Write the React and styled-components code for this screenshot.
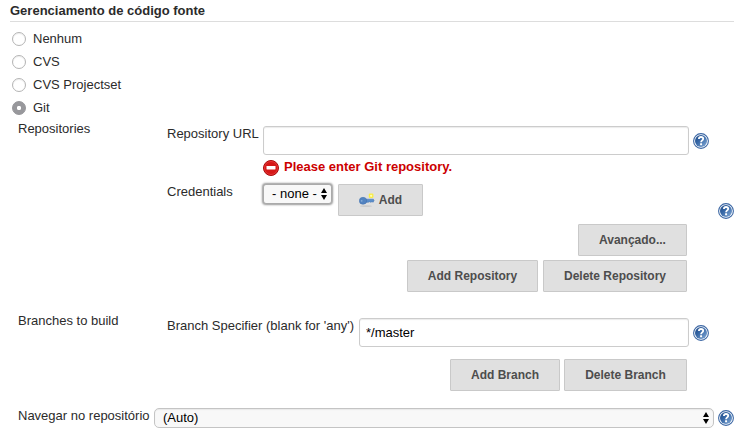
import React, { useId } from "react";
import styled, { createGlobalStyle } from "styled-components";

const GlobalStyle = createGlobalStyle`
  *, *::before, *::after { box-sizing: border-box; }
  body {
    margin: 0;
    background: #fff;
    color: #2b2b2b;
    font: 13px/16px "Liberation Sans", Arial, sans-serif;
  }
`;

const Page = styled.main`
  width: 739px;
  height: 443px;
  padding: 2px 5px 0 10px;
  overflow: hidden;
`;

const SectionTitle = styled.h2`
  margin: 0;
  height: 20px;
  padding-top: 1px;
  border-bottom: 1px solid #ddd;
  font-size: 13px;
  line-height: 16px;
`;

const RadioList = styled.div`
  padding: 5px 0 1px 2px;
`;

const RadioOption = styled.label`
  display: flex;
  align-items: center;
  gap: 7px;
  height: 23px;
`;

const Radio = styled.input`
  appearance: none;
  flex: none;
  width: 14px;
  height: 14px;
  margin: 0;
  border: 1px solid #b4b4b4;
  border-radius: 50%;
  background: #fff;
  box-shadow: inset 0 1px 1px #eee;
  &:checked {
    border-color: #949498;
    background: radial-gradient(circle, #fff 0 1.8px, #98989c 2.5px);
    box-shadow: none;
  }
`;

const FormBlock = styled.section`
  display: grid;
  grid-template-columns: 149px 1fr;
  height: ${(p) => p.$height}px;
  padding-left: 8px;
`;

const BlockLabel = styled.div`
  padding-top: 1px;
`;

const Fields = styled.div`
  display: flex;
  flex-direction: column;
  padding-top: 6px;
`;

const FieldRow = styled.div`
  display: flex;
  align-items: flex-start;
  height: ${(p) => p.$height}px;
`;

const FieldLabel = styled.label`
  flex: none;
  width: ${(p) => p.$width}px;
  white-space: nowrap;
`;

const TextInput = styled.input`
  flex: none;
  width: ${(p) => p.$width}px;
  height: 29px;
  padding: 0 6px 1px;
  border: 1px solid #ccc;
  border-radius: 3px;
  box-shadow: inset 0 1px 1px #ececec;
  font: inherit;
  color: #000;
  outline: none;
`;

const HelpButton = styled.a`
  flex: none;
  display: block;
  width: 16px;
  height: 16px;
  margin: ${(p) => p.$top || 0}px 0 0 4px;
  svg { display: block; }
`;

const ErrorMessage = styled.div`
  display: flex;
  gap: 5px;
  height: 24px;
  margin-left: 96px;
  color: #c00;
  font-weight: bold;
  svg { flex: none; }
  span { margin-top: -1px; }
`;

const SelectBox = styled.button`
  display: flex;
  flex: none;
  align-items: center;
  justify-content: space-between;
  width: ${(p) => p.$width}px;
  height: 20px;
  padding: 0 4px 0 8px;
  border: 1px solid ${(p) => (p.$focused ? "#aaa" : "#c4c4c4")};
  border-radius: ${(p) => (p.$focused ? 3 : 5)}px;
  background: #f8f8f8;
  box-shadow: ${(p) => (p.$focused ? "0 0 2px 1px #999" : "inset 0 1px 1px #e8e8e8")};
  font: 13px/16px "Liberation Sans", Arial, sans-serif;
  color: #000;
  white-space: nowrap;
  svg { flex: none; }
`;

const Button = styled.button`
  display: flex;
  flex: none;
  align-items: center;
  justify-content: center;
  gap: 4px;
  width: ${(p) => p.$width}px;
  height: 32px;
  padding: 0 0 1px;
  border: 1px solid #c9c9c9;
  border-radius: 1px;
  background: #e0e0e0;
  color: #4d4d4d;
  font: bold 12px/16px "Liberation Sans", Arial, sans-serif;
  white-space: nowrap;
`;

const ButtonRow = styled.div`
  display: flex;
  justify-content: flex-end;
  gap: ${(p) => p.$gap || 5}px;
  height: 36px;
  padding-right: 47px;
`;

const CredentialsControls = styled.div`
  display: flex;
  flex: 1;
  align-items: flex-start;
  gap: 6px;
`;

const BrowserRow = styled.div`
  display: flex;
  padding-left: 8px;
`;

function HelpIcon() {
  const id = useId();
  return (
    <svg width="16" height="16" viewBox="0 0 16 16" aria-hidden="true">
      <defs>
        <linearGradient id={id} x1="0" y1="0" x2="1" y2="1">
          <stop offset="0" stopColor="#204a87" />
          <stop offset=".4" stopColor="#3465a4" />
          <stop offset="1" stopColor="#86acd8" />
        </linearGradient>
      </defs>
      <circle cx="8" cy="8" r="7.4" fill="#fff" stroke="#3c67a4" strokeWidth="1.1" />
      <circle cx="8" cy="8" r="6" fill={`url(#${id})`} />
      <path d="M5.9 6C6 4.6 6.8 4 8 4c1.4 0 2.2.7 2.2 1.8 0 1.5-2.1 1.7-2.1 3.4" fill="none" stroke="#fff" strokeWidth="1.8" />
      <rect x="7.1" y="10.3" width="2" height="1.9" rx=".3" fill="#fff" />
    </svg>
  );
}

function Help({ top }) {
  return (
    <HelpButton $top={top} href="#" aria-label="Help">
      <HelpIcon />
    </HelpButton>
  );
}

function ErrorIcon() {
  return (
    <svg width="16" height="16" viewBox="0 0 16 16" aria-hidden="true">
      <circle cx="8" cy="8" r="7.5" fill="#d51818" stroke="#a90b0b" />
      <circle cx="8" cy="8" r="6.5" fill="none" stroke="#ed4a4a" strokeWidth=".6" />
      <rect x="3.5" y="6" width="9" height="3.5" rx=".4" fill="#fff" />
    </svg>
  );
}

function KeyIcon() {
  return (
    <svg width="16" height="16" viewBox="0 0 16 16" aria-hidden="true">
      <ellipse cx="7" cy="14.2" rx="6" ry=".9" fill="#c2c2c2" opacity=".7" />
      <path d="M7 7.2h7.3l.8 1.1-.9 1.9-1.2-.5-1.3.6-1.2-.6-1.2.6H7z" fill="#5b8ecb" stroke="#3e6eae" strokeWidth=".5" />
      <ellipse cx="4" cy="8.8" rx="3.7" ry="3.5" fill="#5383c0" stroke="#3e6eae" strokeWidth=".5" />
      <circle cx="2.7" cy="8.8" r=".9" fill="#86acd8" />
      <rect x="9.8" y="1.5" width="4.6" height="4.6" rx="1" fill="#f8ed48" />
      <circle cx="12.1" cy="3.8" r="1.1" fill="#fffbb8" />
    </svg>
  );
}

function SelectArrows() {
  return (
    <svg width="6" height="12" viewBox="0 0 6 12" aria-hidden="true">
      <path d="M3 0 6 5H0zM3 12 0 7h6z" fill="#000" />
    </svg>
  );
}

const SCM_OPTIONS = ["Nenhum", "CVS", "CVS Projectset", "Git"];

export default function App() {
  return (
    <>
      <GlobalStyle />
      <Page>
        <SectionTitle>Gerenciamento de código fonte</SectionTitle>
        <RadioList role="radiogroup">
          {SCM_OPTIONS.map((name) => (
            <RadioOption key={name}>
              <Radio type="radio" name="scm" defaultChecked={name === "Git"} />
              <span>{name}</span>
            </RadioOption>
          ))}
        </RadioList>

        <FormBlock $height={192}>
          <BlockLabel>Repositories</BlockLabel>
          <Fields>
            <FieldRow $height={34}>
              <FieldLabel $width={96}>Repository URL</FieldLabel>
              <TextInput $width={426} aria-label="Repository URL" />
              <Help top={7} />
            </FieldRow>
            <ErrorMessage>
              <ErrorIcon />
              <span>Please enter Git repository.</span>
            </ErrorMessage>
            <FieldRow $height={40}>
              <FieldLabel $width={96}>Credentials</FieldLabel>
              <CredentialsControls>
                <SelectBox $width={69} $focused>
                  <span>- none -</span>
                  <SelectArrows />
                </SelectBox>
                <Button $width={85}>
                  <KeyIcon />
                  Add
                </Button>
              </CredentialsControls>
              <Help top={19} />
            </FieldRow>
            <ButtonRow>
              <Button $width={109}>Avançado...</Button>
            </ButtonRow>
            <ButtonRow>
              <Button $width={131}>Add Repository</Button>
              <Button $width={144}>Delete Repository</Button>
            </ButtonRow>
          </Fields>
        </FormBlock>

        <FormBlock $height={96}>
          <BlockLabel>Branches to build</BlockLabel>
          <Fields>
            <FieldRow $height={41}>
              <FieldLabel $width={192}>Branch Specifier (blank for 'any')</FieldLabel>
              <TextInput $width={330} defaultValue="*/master" aria-label="Branch Specifier" />
              <Help top={7} />
            </FieldRow>
            <ButtonRow $gap={4}>
              <Button $width={110}>Add Branch</Button>
              <Button $width={123}>Delete Branch</Button>
            </ButtonRow>
          </Fields>
        </FormBlock>

        <BrowserRow>
          <FieldLabel $width={136}>Navegar no repositório</FieldLabel>
          <SelectBox $width={560}>
            <span>(Auto)</span>
            <SelectArrows />
          </SelectBox>
          <Help top={2} />
        </BrowserRow>
      </Page>
    </>
  );
}
